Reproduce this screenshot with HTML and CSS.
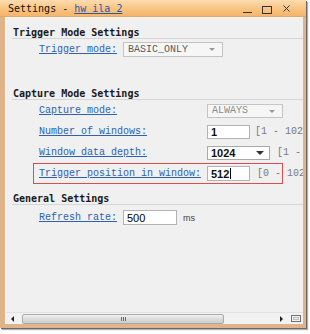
FILE: index.html
```html
<!DOCTYPE html>
<html>
<head>
<meta charset="utf-8">
<link rel="stylesheet" href="styles.css">
</head>
<body>
<div class="window">
  <div class="titlebar">
    <span class="title">Settings - <a class="tlink">hw ila 2</a></span>
    <svg class="controls" width="50" height="16" viewBox="0 0 50 16">
      <line x1="1" y1="12.5" x2="10" y2="12.5" stroke="#333" stroke-width="1"/>
      <rect x="20.5" y="6.5" width="9" height="7" fill="none" stroke="#333" stroke-width="1"/>
      <path d="M41.5 5.5 L47.5 11.5 M47.5 5.5 L41.5 11.5" stroke="#333" stroke-width="1" fill="none"/>
    </svg>
  </div>
  <div class="frame">
    <div class="client">
      <div class="content">
        <section class="group narrow first">
          <div class="heading">Trigger Mode Settings</div>
          <div class="row">
            <a class="label">Trigger mode:</a>
            <span class="select off w100">BASIC_ONLY<i class="arrow"></i></span>
          </div>
        </section>
        <section class="group wide second">
          <div class="heading">Capture Mode Settings</div>
          <div class="row">
            <a class="label">Capture mode:</a>
            <span class="select off dim w76">ALWAYS<i class="arrow"></i></span>
          </div>
          <div class="row">
            <a class="label">Number of windows:</a>
            <span class="input w43">1</span>
            <span class="range">[1 - 102</span>
          </div>
          <div class="row">
            <a class="label">Window data depth:</a>
            <span class="select on w63">1024<i class="arrow dark"></i></span>
            <span class="range r7">[1 -</span>
          </div>
          <div class="row marked">
            <a class="label">Trigger position in window:</a>
            <span class="input w43 tall">512<i class="caret"></i></span>
            <span class="range r7">[0 - 102</span>
          </div>
        </section>
        <section class="group narrow third">
          <div class="heading">General Settings</div>
          <div class="row spaced">
            <a class="label">Refresh rate:</a>
            <span class="input w54 tall plain">500</span>
            <span class="unit">ms</span>
          </div>
        </section>
      </div>
      <div class="hscroll">
        <i class="sarrow left"></i>
        <div class="track">
          <div class="thumb"><span class="grip"></span><span class="grip"></span><span class="grip"></span></div>
        </div>
        <i class="sarrow right"></i>
        <span class="corner"></span>
      </div>
    </div>
  </div>
</div>
</body>
</html>
```

FILE: styles.css
```css
html, body {
  margin: 0;
  padding: 0;
  background: #ffffff;
  width: 310px;
  height: 334px;
  overflow: hidden;
}

.window {
  width: 306px;
  height: 328px;
  background: #e0b48a;
  display: flex;
  flex-direction: column;
  box-shadow: 1px 1px 0 #6a6a6a, 2px 2px 1px #b0b0b0;
}

.titlebar {
  height: 16px;
  flex: 0 0 16px;
  border-bottom: 1px solid #e9a763;
  background: linear-gradient(#fcdcb0, #f8c27e 60%, #f6b56a);
  display: flex;
  align-items: center;
  padding: 0 14px 0 8px;
}

.title {
  font-family: "DejaVu Sans Mono", "Liberation Mono", monospace;
  font-size: 10px;
  color: #111;
  white-space: pre;
}

.tlink {
  color: #2a58a8;
  text-decoration: underline;
}

.controls {
  margin-left: auto;
  display: block;
}

.frame {
  flex: 1;
  display: flex;
  padding: 0 3px 4px 5px;
  min-height: 0;
}

.client {
  flex: 1;
  display: flex;
  flex-direction: column;
  background: #f0f0f0;
  border-top: 1px solid #fafafa;
  border-left: 1px solid #fafafa;
  overflow: hidden;
  min-width: 0;
}

.content {
  flex: 1;
  padding-top: 9px;
  overflow: hidden;
}

.heading {
  margin-left: 6px;
  padding-left: 1px;
  height: 11px;
  line-height: 11px;
  border-bottom: 1px solid #d6d6d6;
  font-family: "DejaVu Sans Mono", "Liberation Mono", monospace;
  font-size: 10px;
  font-weight: bold;
  color: #1a1a1a;
  white-space: nowrap;
}

.second { margin-top: 28px; }
.third { margin-top: 9px; }

.row {
  display: flex;
  align-items: center;
  height: 21px;
  padding-left: 33px;
  white-space: nowrap;
}

.row.spaced { margin-top: 2px; }

.row.marked {
  margin-left: 27px;
  padding-left: 5px;
  width: 250px;
  box-sizing: border-box;
  border: 1px solid #e04c4c;
}

.label {
  font-family: "Liberation Mono", "DejaVu Sans Mono", monospace;
  font-size: 10px;
  color: #2c62b4;
  text-decoration: underline;
  flex: 0 0 auto;
}

.narrow .label { width: 84px; }
.wide .label { width: 168px; }

.select, .input {
  box-sizing: border-box;
  height: 14px;
  display: inline-flex;
  align-items: center;
  flex: 0 0 auto;
  position: relative;
}

.tall { height: 15px; }

.select {
  border: 1px solid #c4c4c4;
  padding-left: 4px;
  font-family: "Liberation Mono", monospace;
  font-size: 10px;
}

.select.off {
  background: #f6f6f6;
  color: #5a5a5a;
  height: 15px;
}

.select.dim { color: #8a8a8a; height: 14px; }

.select.on {
  background: #ffffff;
  border-color: #a9a9a9;
  font-family: "Liberation Sans", Arial, sans-serif;
  font-size: 11px;
  font-weight: bold;
  color: #111;
  padding-left: 3px;
}

.arrow {
  position: absolute;
  right: 7px;
  top: 5px;
  width: 0;
  height: 0;
  border-left: 3px solid transparent;
  border-right: 3px solid transparent;
  border-top: 3px solid #9a9a9a;
}

.arrow.dark {
  border-top-color: #333;
  border-left-width: 4px;
  border-right-width: 4px;
  border-top-width: 4px;
  right: 5px;
  top: 4px;
}

.input {
  background: #ffffff;
  border: 1px solid #b3b3b3;
  padding-left: 3px;
  font-family: "Liberation Sans", Arial, sans-serif;
  font-size: 11px;
  font-weight: bold;
  color: #111;
}

.input.plain { font-weight: normal; color: #000; }

.caret {
  display: inline-block;
  width: 1px;
  height: 11px;
  background: #000;
  margin-left: 1px;
}

.w100 { width: 100px; }
.w76 { width: 76px; }
.w63 { width: 63px; }
.w43 { width: 43px; }
.w54 { width: 54px; }

.range {
  margin-left: 5px;
  font-family: "Liberation Mono", monospace;
  font-size: 10px;
  color: #7a7a7a;
}

.range.r7 { margin-left: 7px; }

.unit {
  margin-left: 6px;
  font-family: "Liberation Sans", Arial, sans-serif;
  font-size: 9px;
  color: #444;
}

.hscroll {
  flex: 0 0 11px;
  height: 11px;
  display: flex;
  align-items: center;
  background: #f2f2f2;
  border-top: 1px solid #e2e2e2;
}

.sarrow {
  width: 0;
  height: 0;
  border-top: 3px solid transparent;
  border-bottom: 3px solid transparent;
}

.sarrow.left {
  border-right: 3px solid #222;
  margin-left: 5px;
  margin-right: 8px;
}

.sarrow.right {
  border-left: 3px solid #222;
  margin-left: 56px;
}

.track {
  display: flex;
  height: 10px;
  align-items: stretch;
}

.thumb {
  width: 202px;
  box-sizing: border-box;
  border: 1px solid #a9a9a9;
  border-radius: 2px;
  background: linear-gradient(#f2f2f2, #dcdcdc 50%, #cdcdcd);
  display: flex;
  justify-content: center;
  align-items: center;
  gap: 1px;
}

.grip {
  width: 1px;
  height: 4px;
  background: #6a6a6a;
}

.corner {
  margin-left: 8px;
  width: 10px;
  height: 7px;
  box-sizing: border-box;
  border: 1px solid #707070;
  box-shadow: inset 0 0 0 1px #f2f2f2, inset 0 0 0 2px #bdbdbd;
}
```
